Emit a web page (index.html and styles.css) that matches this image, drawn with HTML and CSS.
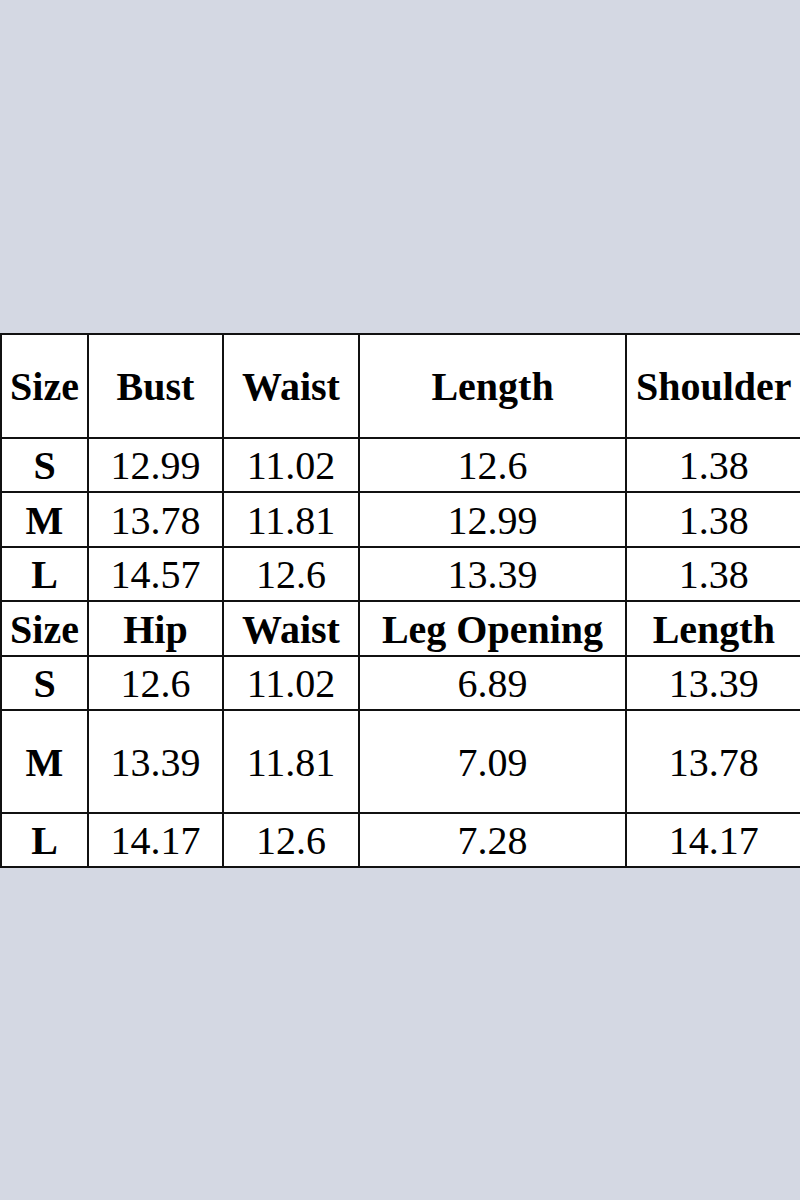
FILE: index.html
```html
<!DOCTYPE html>
<html>
<head>
<meta charset="utf-8">
<link rel="stylesheet" href="styles.css">
</head>
<body>
<main class="page">
  <table class="size-table">
    <colgroup>
      <col class="c1"><col class="c2"><col class="c3"><col class="c4"><col class="c5">
    </colgroup>
    <tbody>
      <tr class="r-tall head"><td>Size</td><td>Bust</td><td>Waist</td><td>Length</td><td>Shoulder</td></tr>
      <tr class="r-a"><th>S</th><td>12.99</td><td>11.02</td><td>12.6</td><td>1.38</td></tr>
      <tr class="r-b"><th>M</th><td>13.78</td><td>11.81</td><td>12.99</td><td>1.38</td></tr>
      <tr class="r-a"><th>L</th><td>14.57</td><td>12.6</td><td>13.39</td><td>1.38</td></tr>
      <tr class="r-b head"><td>Size</td><td>Hip</td><td>Waist</td><td>Leg Opening</td><td>Length</td></tr>
      <tr class="r-a"><th>S</th><td>12.6</td><td>11.02</td><td>6.89</td><td>13.39</td></tr>
      <tr class="r-tall2"><th>M</th><td>13.39</td><td>11.81</td><td>7.09</td><td>13.78</td></tr>
      <tr class="r-a"><th>L</th><td>14.17</td><td>12.6</td><td>7.28</td><td>14.17</td></tr>
    </tbody>
  </table>
</main>
</body>
</html>
```

FILE: styles.css
```css
html, body {
  margin: 0;
  padding: 0;
  background: #d4d8e3;
}

.page {
  height: 1200px;
  display: flex;
  align-items: center;
}

.size-table {
  width: 800px;
  table-layout: fixed;
  border-collapse: collapse;
  background: #ffffff;
  font-family: "Liberation Serif", "Times New Roman", serif;
  font-size: 40px;
  color: #000;
}

.c1 { width: 87px; }
.c2 { width: 135px; }
.c3 { width: 136px; }
.c4 { width: 267px; }
.c5 { width: 175px; }

.size-table td,
.size-table th {
  border: 2px solid #111;
  padding: 3px 0 0 0;
  text-align: center;
  vertical-align: middle;
  line-height: 1;
  white-space: nowrap;
  overflow: visible;
}

.size-table tr > :last-child {
  border-right: 1px solid #777;
}

.size-table th {
  font-weight: bold;
}

.head td {
  font-weight: bold;
  font-size: 40px;
}

.r-tall { height: 104px; }
.r-tall2 { height: 103px; }
.r-a { height: 54px; }
.r-b { height: 55px; }
```
